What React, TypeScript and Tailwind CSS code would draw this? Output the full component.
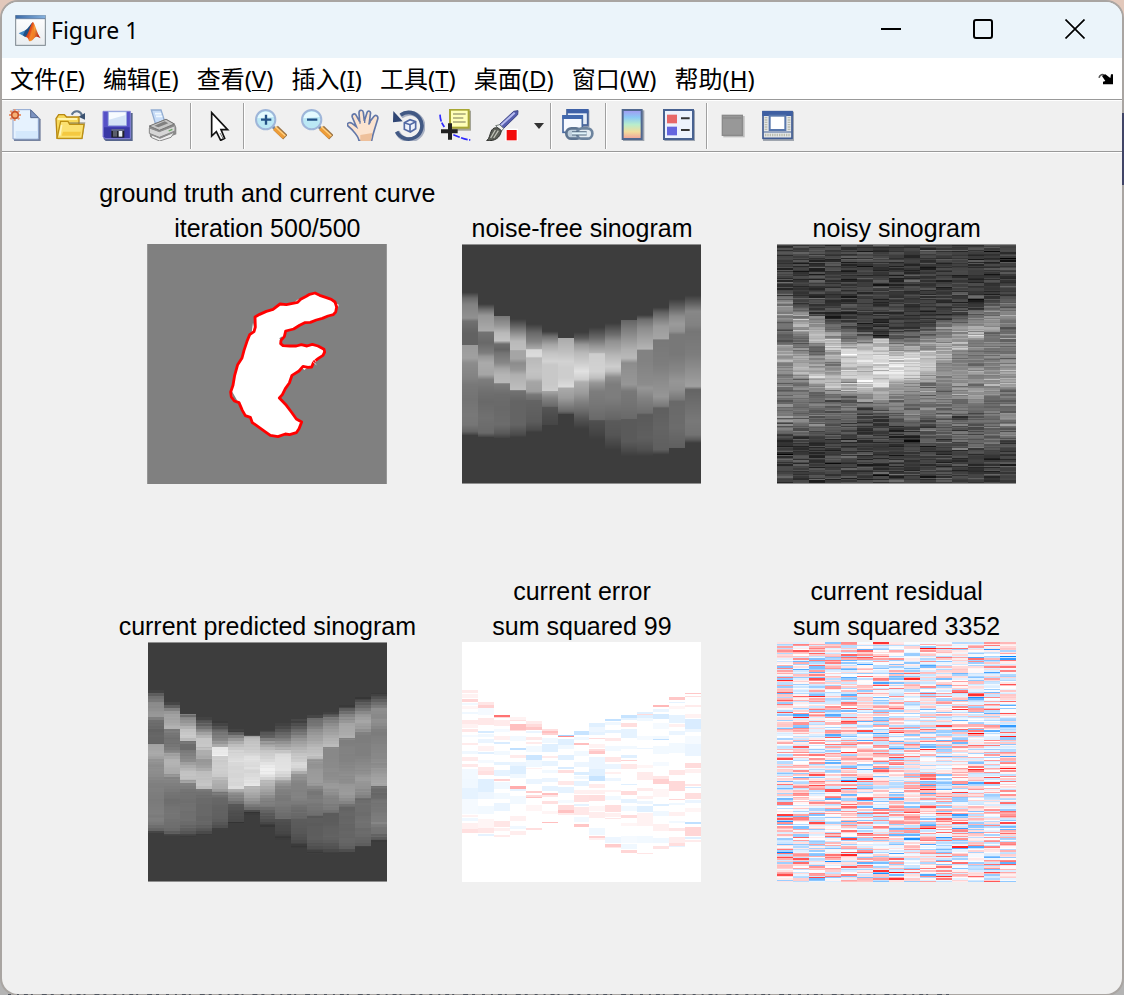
import type { ReactNode } from 'react';

type Stop = [y: number, gray: number];
type Band = [y: number, height: number, value: number];

const COLS = 15;
const ROWS = 240;
const BACKGROUND = 61;

// Brightness profile of every projection angle, top to bottom. y runs from 18 to 738.
const PROFILES: Stop[][] = [
  [[163, 61], [180, 105], [200, 130], [240, 145], [250, 112], [285, 98], [322, 98], [322, 155], [360, 160], [375, 140], [420, 130], [440, 120], [485, 115], [530, 120], [560, 118], [580, 100], [592, 65]],
  [[198, 61], [215, 110], [232, 150], [278, 170], [283, 115], [315, 105], [345, 125], [355, 150], [375, 170], [410, 165], [425, 125], [460, 112], [490, 105], [540, 112], [585, 105], [598, 65]],
  [[234, 61], [234, 120], [262, 150], [285, 185], [308, 195], [318, 110], [335, 100], [345, 115], [375, 135], [392, 165], [410, 180], [435, 185], [437, 125], [470, 108], [510, 105], [560, 108], [585, 90], [600, 65]],
  [[243, 61], [262, 95], [290, 150], [310, 185], [335, 190], [338, 165], [362, 165], [375, 140], [395, 150], [410, 175], [455, 190], [458, 115], [490, 100], [560, 100], [590, 75], [598, 61]],
  [[258, 61], [285, 105], [310, 130], [333, 170], [335, 215], [355, 220], [360, 185], [400, 195], [420, 190], [432, 165], [460, 160], [470, 120], [485, 110], [487, 100], [550, 92], [575, 75], [583, 61]],
  [[280, 61], [295, 110], [320, 165], [345, 195], [370, 210], [380, 200], [440, 200], [458, 205], [460, 165], [480, 130], [505, 105], [508, 85], [540, 75], [560, 70]],
  [[300, 61], [300, 170], [340, 190], [370, 210], [390, 205], [420, 205], [447, 220], [450, 170], [480, 155], [500, 130], [520, 105], [528, 75]],
  [[282, 61], [300, 90], [320, 150], [345, 185], [375, 205], [400, 225], [425, 205], [432, 175], [465, 155], [490, 130], [515, 110], [540, 85], [573, 61]],
  [[268, 61], [300, 105], [325, 150], [345, 180], [347, 205], [400, 210], [420, 190], [435, 150], [460, 125], [500, 118], [545, 105], [548, 80], [580, 70], [605, 61]],
  [[255, 61], [290, 110], [310, 145], [335, 165], [355, 185], [385, 205], [400, 190], [418, 140], [440, 125], [480, 125], [545, 100], [548, 90], [590, 85], [615, 72], [635, 61]],
  [[246, 61], [246, 100], [280, 130], [310, 155], [335, 175], [360, 185], [375, 140], [400, 145], [440, 150], [460, 120], [500, 115], [542, 105], [544, 90], [610, 90], [640, 72], [655, 61]],
  [[231, 61], [245, 110], [270, 140], [300, 160], [333, 180], [337, 130], [370, 130], [440, 140], [450, 150], [480, 130], [525, 110], [530, 90], [600, 95], [635, 80], [655, 61]],
  [[208, 61], [225, 100], [245, 130], [265, 155], [302, 165], [306, 120], [380, 125], [430, 140], [475, 150], [505, 120], [510, 95], [570, 100], [635, 95], [650, 61]],
  [[183, 61], [210, 100], [235, 140], [258, 155], [280, 145], [290, 120], [350, 120], [400, 135], [430, 150], [455, 145], [485, 120], [490, 105], [570, 108], [630, 95]],
  [[172, 61], [195, 95], [220, 135], [260, 130], [280, 118], [350, 125], [390, 140], [445, 160], [455, 100], [500, 110], [550, 120], [590, 115], [605, 90], [615, 61]],
];

// Prediction error per angle; positive is red, negative is blue.
const ERRORS: Band[][] = [
  [[162, 9, 0.08], [175, 12, 0.05], [189, 9, 0.16], [200, 8, -0.05], [210, 9, 0.04], [228, 6, -0.06], [252, 12, 0.09], [265, 10, 0.05], [279, 8, 0.1], [297, 6, -0.04], [320, 7, 0.08], [345, 10, -0.06], [362, 12, 0.08], [385, 9, 0.09], [400, 30, -0.05], [430, 27, -0.06], [457, 33, -0.1], [490, 45, -0.04], [537, 6, 0.05], [546, 9, -0.06], [560, 18, 0.06], [578, 13, 0.12]],
  [[198, 9, 0.1], [207, 9, 0.18], [216, 20, -0.04], [246, 22, 0.09], [285, 6, -0.16], [294, 8, -0.06], [308, 12, -0.08], [330, 14, 0.05], [348, 6, -0.12], [372, 10, -0.04], [393, 12, 0.09], [405, 12, 0.12], [430, 38, -0.12], [468, 20, -0.07], [510, 24, -0.05], [550, 25, 0.04], [575, 15, 0.1], [594, 5, -0.1]],
  [[237, 6, 0.55], [243, 4, 0.15], [251, 18, 0.08], [280, 8, -0.04], [300, 12, 0.06], [318, 7, -0.15], [345, 12, -0.05], [378, 9, -0.1], [402, 18, -0.1], [429, 7, 0.18], [438, 20, -0.06], [470, 18, -0.05], [500, 24, -0.08], [555, 18, 0.1], [576, 10, 0.06], [597, 5, 0.08]],
  [[243, 8, 0.05], [252, 4, 0.12], [264, 18, 0.25], [282, 3, 0.12], [300, 14, -0.05], [336, 7, -0.25], [357, 9, 0.08], [378, 12, -0.08], [390, 24, -0.13], [414, 12, -0.06], [450, 8, 0.32], [459, 7, -0.1], [480, 24, -0.05], [540, 15, 0.06], [570, 8, -0.06], [584, 12, 0.07]],
  [[255, 10, 0.08], [265, 8, 0.14], [273, 9, 0.22], [285, 6, -0.08], [303, 9, 0.09], [318, 6, 0.08], [330, 18, -0.05], [357, 15, -0.2], [372, 20, -0.06], [396, 4, 0.05], [430, 14, -0.08], [465, 5, 0.2], [477, 6, 0.14], [483, 4, 0.25], [507, 18, 0.04], [576, 6, 0.13]],
  [[279, 5, 0.12], [284, 8, 0.25], [292, 6, 0.18], [306, 15, -0.06], [324, 24, -0.12], [360, 6, 0.08], [375, 15, -0.09], [402, 9, -0.05], [426, 12, -0.08], [450, 15, -0.1], [472, 5, 0.25], [478, 5, 0.1], [495, 10, 0.12], [525, 10, 0.04], [557, 4, 0.25]],
  [[297, 3, -0.35], [300, 4, 0.45], [309, 18, -0.12], [327, 12, -0.06], [357, 15, -0.12], [393, 6, -0.15], [402, 9, 0.13], [435, 12, 0.09], [453, 18, -0.1], [492, 9, -0.04], [508, 14, 0.14], [522, 8, 0.24], [530, 8, 0.08]],
  [[285, 12, -0.22], [303, 9, -0.06], [320, 8, 0.25], [345, 15, -0.05], [378, 15, -0.07], [408, 8, -0.14], [420, 9, -0.06], [435, 15, -0.1], [462, 12, 0.06], [477, 22, 0.12], [503, 6, -0.1], [513, 24, 0.09], [543, 15, -0.05], [564, 8, 0.22]],
  [[261, 12, -0.12], [273, 14, -0.07], [288, 9, -0.1], [306, 3, 0.14], [324, 12, 0.05], [339, 6, 0.14], [345, 9, 0.22], [363, 36, -0.08], [399, 20, -0.12], [420, 16, -0.22], [444, 12, 0.08], [462, 12, 0.06], [476, 18, 0.13], [510, 15, 0.04], [528, 18, 0.07], [575, 22, -0.06], [600, 6, 0.18], [606, 5, 0.06]],
  [[248, 7, -0.24], [258, 9, -0.06], [282, 9, -0.1], [305, 10, 0.09], [330, 14, -0.05], [362, 16, 0.1], [384, 14, -0.08], [408, 6, 0.06], [426, 9, -0.07], [462, 6, 0.05], [480, 12, -0.05], [507, 20, 0.13], [530, 14, 0.06], [546, 4, 0.1], [602, 18, -0.07], [624, 8, 0.2], [632, 4, 0.1]],
  [[237, 10, -0.22], [247, 5, -0.1], [262, 12, 0.13], [280, 27, -0.1], [330, 9, -0.05], [357, 9, -0.12], [372, 4, 0.18], [384, 15, 0.09], [444, 4, -0.12], [465, 12, 0.14], [488, 14, -0.1], [510, 15, -0.05], [537, 8, 0.14], [560, 9, 0.04], [600, 20, -0.04], [625, 15, -0.06], [642, 9, 0.16]],
  [[228, 5, -0.12], [233, 3, 0.14], [236, 9, -0.12], [246, 10, -0.06], [300, 12, -0.04], [336, 4, -0.08], [387, 10, 0.04], [408, 24, 0.08], [456, 9, 0.08], [480, 9, 0.06], [495, 9, -0.07], [510, 17, -0.12], [530, 40, 0.05], [600, 20, -0.05], [650, 5, 0.1]],
  [[207, 5, 0.28], [218, 10, -0.08], [234, 15, -0.16], [262, 18, -0.04], [300, 8, -0.05], [308, 5, -0.24], [330, 24, -0.05], [378, 12, -0.04], [420, 9, 0.1], [428, 16, 0.18], [460, 24, 0.04], [503, 7, -0.13], [525, 15, -0.06], [565, 20, 0.06], [606, 14, -0.06], [630, 10, 0.11]],
  [[182, 10, 0.22], [197, 5, -0.1], [210, 9, 0.04], [236, 24, -0.1], [264, 9, 0.06], [285, 12, -0.08], [320, 30, -0.05], [402, 16, 0.1], [435, 30, 0.15], [488, 4, 0.16], [500, 8, -0.06], [528, 12, 0.06], [555, 6, -0.05], [577, 8, 0.1], [604, 16, 0.07], [622, 7, 0.13], [629, 4, -0.1]],
  [[170, 4, 0.22], [180, 4, 0.12], [208, 5, 0.08], [234, 12, 0.05], [249, 30, -0.15], [279, 9, -0.07], [300, 24, -0.04], [325, 35, -0.08], [381, 15, 0.14], [399, 12, 0.06], [444, 6, 0.1], [453, 4, -0.16], [470, 18, 0.13], [492, 10, -0.08], [515, 12, 0.04], [558, 6, -0.25], [574, 26, 0.16], [604, 4, -0.12], [612, 6, 0.08]],
];

// Strongest noise samples: column, y, amplitude.
const OUTLIERS: [number, number, number][] = [
  [9, 34, 0.95], [8, 128, 0.85], [12, 185, -0.9], [12, 293, 1], [7, 287, 0.8], [14, 61, -1], [6, 20, 0.8],
  [14, 298, 0.9], [4, 436, 1], [5, 427, 0.9], [9, 461, 0.95], [8, 608, -0.9], [3, 676, -0.9], [0, 649, -1],
  [4, 654, 0.85], [7, 709, 0.95], [14, 559, 0.8], [10, 533, 0.75], [3, 461, 0.7], [13, 422, 0.7], [13, 440, 0.7],
  [12, 440, -0.75], [9, 577, 0.9], [11, 577, -0.8], [4, 608, 0.75], [2, 181, 0.85], [0, 132, 0.85], [0, 716, 0.7],
  [9, 716, -0.7], [0, 229, 0.7], [14, 230, 0.7], [12, 400, 0.85], [9, 569, -0.7], [6, 290, -0.75], [4, 71, -0.6],
];

function createRandom(seed: number) {
  let state = seed;
  return () => {
    state = (state + 0x6d2b79f5) | 0;
    let t = Math.imul(state ^ (state >>> 15), 1 | state);
    t = (t + Math.imul(t ^ (t >>> 7), 61 | t)) ^ t;
    return ((t ^ (t >>> 14)) >>> 0) / 4294967296;
  };
}

function profileAt(col: number, y: number) {
  const stops = PROFILES[col];
  if (y < stops[0][0] || y > stops[stops.length - 1][0]) return BACKGROUND;
  for (let i = 1; i < stops.length; i++) {
    const [y0, g0] = stops[i - 1];
    const [y1, g1] = stops[i];
    if (y <= y1) return y1 === y0 ? g1 : g0 + ((g1 - g0) * (y - y0)) / (y1 - y0);
  }
  return BACKGROUND;
}

function errorAt(col: number, y: number) {
  const band = ERRORS[col].find(([top, height]) => y >= top && y < top + height);
  return band ? band[2] : 0;
}

const yOf = (row: number) => 19.5 + row * 3;

const build = (cell: (col: number, row: number) => number) =>
  Array.from({ length: COLS }, (_, col) => Array.from({ length: ROWS }, (_, row) => cell(col, row)));

const random = createRandom(500);
const NOISE_ROWS = 180;
const rawNoise = Array.from({ length: COLS }, () =>
  Array.from({ length: NOISE_ROWS }, () => (random() + random() + random() + random() - 2) * 0.52),
);
OUTLIERS.forEach(([col, y, value]) => {
  rawNoise[col][Math.floor(((y - 18) / 720) * NOISE_ROWS)] = value;
});

const noise = build((col, row) => rawNoise[col][Math.floor((row / ROWS) * NOISE_ROWS)]);
const clean = build((col, row) => profileAt(col, yOf(row)));
const noisy = build((col, row) => clean[col][row] + noise[col][row] * 58);
const predicted = build((col, row) => {
  const y = yOf(row);
  const value = profileAt(col, Math.floor(y / 9) * 9 + 4);
  const base = clean[col][row] === BACKGROUND ? BACKGROUND : value;
  return BACKGROUND + (base - BACKGROUND) * 1.09 - errorAt(col, y) * 40;
});
const error = build((col, row) => errorAt(col, yOf(row)));
const residual = build((col, row) => noise[col][row] + error[col][row] * 0.3);

function grayColor(value: number) {
  const v = Math.max(0, Math.min(255, Math.round(value)));
  return `rgb(${v},${v},${v})`;
}

function divergingColor(value: number) {
  const v = Math.min(1, Math.abs(value));
  const fade = Math.round(255 * (1 - v));
  return value >= 0 ? `rgb(255,${fade},${fade})` : `rgb(${fade},${Math.round(255 - 125 * v)},255)`;
}

interface HeatmapProps {
  label: string;
  data: number[][];
  color: (value: number) => string;
  framed?: boolean;
}

function Heatmap({ label, data, color, framed = false }: HeatmapProps) {
  return (
    <svg
      role="img"
      aria-label={label}
      viewBox="0 0 239 240"
      shapeRendering="crispEdges"
      className="block h-[240px] w-[239px]"
    >
      {data.map((column, col) => {
        const x = Math.round((col * 239) / COLS);
        const width = Math.round(((col + 1) * 239) / COLS) - x;
        const bars: ReactNode[] = [];
        let start = 0;
        for (let row = 1; row <= column.length; row++) {
          if (row === column.length || color(column[row]) !== color(column[start])) {
            bars.push(<rect key={start} x={x} y={start} width={width} height={row - start} fill={color(column[start])} />);
            start = row;
          }
        }
        return <g key={col}>{bars}</g>;
      })}
      {framed && <path d="M0 .5H239M0 239.5H239" stroke="#8f8f8f" strokeWidth="1" />}
    </svg>
  );
}

const CURVE =
  '526,173 540,180 558,186 575,192 586,200 591,215 588,230 581,238 565,242 548,249 530,254 512,261 495,262 480,270 462,281 438,287 434,304 424,315 423,325 430,331 450,332 470,332 485,328 502,332 518,327 535,332 553,342 555,350 550,360 535,370 522,380 516,395 505,396 490,393 478,407 457,420 449,443 437,460 428,478 419,488 440,510 455,530 470,551 486,560 478,580 470,592 450,598 437,596 415,604 392,600 375,588 350,570 338,562 332,546 317,541 308,525 298,502 284,497 275,485 273,470 280,450 285,420 294,388 307,368 313,345 322,318 330,298 343,289 347,275 346,245 360,237 380,228 400,222 421,206 440,208 474,201 483,192 500,183 510,177';

function GroundTruth() {
  return (
    <svg role="img" aria-label="ground truth and current curve" viewBox="22 26 720 720" className="block h-[240px] w-[240px]">
      <rect x="22" y="26" width="720" height="720" fill="#808080" />
      <polygon points={CURVE} fill="#fff" />
      <path d="M276 466L294 498L280 492ZM419 309L428 303L424 316Z" fill="#808080" />
      <path d="M340 262L336 292L345 286ZM460 204L476 192L484 196ZM590 204L597 208L594 220ZM486 396L494 404L502 397Z" fill="#fff" />
      <polygon points={CURVE} fill="none" stroke="#f00" strokeWidth="8.5" strokeLinejoin="round" />
      <path d="M518 378L530 388M524 372L529 380" stroke="#fff" strokeWidth="2" />
      <path d="M23 26V746M741 26V746" stroke="#a8a8a8" strokeWidth="2" />
    </svg>
  );
}

interface PlotProps {
  lines: string[];
  children: ReactNode;
}

function Plot({ lines, children }: PlotProps) {
  return (
    <figure className="flex flex-col items-center justify-end">
      <figcaption className="-mb-0.5 pt-0.5 text-center text-[25px] leading-[35px] whitespace-nowrap">
        {lines.map((line) => (
          <div key={line}>{line}</div>
        ))}
      </figcaption>
      {children}
    </figure>
  );
}

function Icon({ children }: { children: ReactNode }) {
  return (
    <svg viewBox="0 0 96 96" aria-hidden="true" className="h-8 w-8 shrink-0">
      {children}
    </svg>
  );
}

function MatlabLogo() {
  return (
    <svg viewBox="0 0 93 93" aria-hidden="true" className="h-[31px] w-[31px] shrink-0">
      <defs>
        <linearGradient id="logo-bg" x1="0" y1="0" x2="0" y2="1">
          <stop offset="0" stopColor="#fff" />
          <stop offset="1" stopColor="#e9edf0" />
        </linearGradient>
        <linearGradient id="logo-bar" x1="0" x2="1">
          <stop offset="0" stopColor="#3c6ba8" />
          <stop offset="1" stopColor="#86b2de" />
        </linearGradient>
        <linearGradient id="logo-peak" x1="0" y1="0" x2="1" y2=".4">
          <stop offset="0" stopColor="#8c2414" />
          <stop offset=".45" stopColor="#e5501c" />
          <stop offset=".62" stopColor="#f7a63c" />
          <stop offset="1" stopColor="#b9281a" />
        </linearGradient>
      </defs>
      <rect x="2" y="2" width="89" height="89" fill="url(#logo-bg)" stroke="#7c868e" strokeWidth="3" />
      <rect x="2" y="1" width="89" height="9" fill="url(#logo-bar)" />
      <path d="M3 11H90" stroke="#294f80" strokeWidth="2" />
      <path d="M11 55L31 46L42 54L31 66Z" fill="#3f86c4" />
      <path d="M31 46C40 40 46 27 53 22L43 58L31 66L24 61Z" fill="#1f4f86" />
      <path d="M31 66C42 56 48 22 54 21C60 25 66 56 77 70C69 66 65 62 58 69C51 78 47 80 42 78C40 70 37 66 31 66Z" fill="url(#logo-peak)" />
      <path d="M54 22C54 42 52 61 43 77C50 76 55 68 60 65Z" fill="#f47b20" opacity=".8" />
    </svg>
  );
}

function NewIcon() {
  return (
    <Icon>
      <path d="M15 4H68L95 31V96H15Z" fill="#76839f" />
      <path d="M12 2H65L88 26V90H12Z" fill="#e6f2fe" stroke="#8da5cf" strokeWidth="3" />
      <path d="M20 66H86V88H20Z" fill="#d4e8fc" />
      <path d="M65 3V26H88Z" fill="#7c93c1" stroke="#53688f" strokeWidth="3" />
      <path d="M17 0V36M0 18H36M4 5L31 31M31 5L4 31" stroke="#e79a76" strokeWidth="6" />
      <circle cx="18" cy="18" r="10" fill="#f7b175" stroke="#c7532b" strokeWidth="5" />
    </Icon>
  );
}

function OpenIcon() {
  return (
    <Icon>
      <path d="M50 17C58 2 75 4 81 18" fill="none" stroke="#60768f" strokeWidth="6" />
      <path d="M90 12V32L70 23Z" fill="#3c5271" />
      <path d="M3 29L11 17H28L35 24H72V86H6Z" fill="#f7d95a" stroke="#b78712" strokeWidth="4" />
      <path d="M8 30H66" stroke="#fff4ad" strokeWidth="6" />
      <path d="M19 40H91L82 91H8Z" fill="#76735f" opacity=".6" />
      <path d="M17 37H39L44 46H87L81 88H6Z" fill="#fbe171" stroke="#bd9013" strokeWidth="4" />
      <path d="M20 48L14 80" stroke="#fff6be" strokeWidth="5" />
      <path d="M24 68H78L75 80H20Z" fill="#f4c941" />
    </Icon>
  );
}

function SaveIcon() {
  return (
    <Icon>
      <path d="M8 12H95V96H14L8 90Z" fill="#56658c" />
      <path d="M6 7H88V89H12L6 83Z" fill="#5651c7" stroke="#8582d8" strokeWidth="3" />
      <path d="M9 55H86V87H14L9 82Z" fill="#3938a6" />
      <path d="M22 8H76V50H22Z" fill="#f7fbff" stroke="#9aaddf" strokeWidth="3" />
      <path d="M24 32L74 18V48H24Z" fill="#d5e4f7" />
      <rect x="31" y="61" width="39" height="25" fill="#20212b" />
      <rect x="36" y="66" width="12" height="17" fill="#5a5e6b" />
      <rect x="53" y="66" width="11" height="17" fill="#e8edf4" />
      <rect x="31" y="61" width="39" height="4" fill="#7b83ae" />
    </Icon>
  );
}

function PrintIcon() {
  return (
    <Icon>
      <path d="M13 3H42L53 37L25 43Z" fill="#c7dcf7" stroke="#91acd1" strokeWidth="4" />
      <path d="M24 14H43M27 22H46" stroke="#eff8ff" strokeWidth="5" />
      <path d="M6 51L57 29L83 44L88 56V76L38 96L9 83Z" fill="#8a8a8a" />
      <path d="M7 51L57 31L82 45L37 64Z" fill="#c6c6c6" stroke="#777" strokeWidth="3" />
      <path d="M22 50L53 37L64 43L34 55Z" fill="#808080" />
      <path d="M7 57L37 68L84 50V66L37 85L7 73Z" fill="#d6d6d6" stroke="#8a8a8a" strokeWidth="3" />
      <path d="M12 77L39 88L83 69L72 85L38 96L14 86Z" fill="#eee" stroke="#8a8a8a" strokeWidth="3" />
      <path d="M65 66L76 61" stroke="#6aa863" strokeWidth="4" />
    </Icon>
  );
}

function PointerIcon() {
  return (
    <svg viewBox="0 0 90 96" aria-hidden="true" className="h-8 w-[30px] shrink-0">
      <path d="M29 11V81L43 68L56 94L68 88L57 62H77Z" fill="#fff" stroke="#111" strokeWidth="5" />
      <path d="M54 72L64 90" stroke="#777" strokeWidth="3" />
    </svg>
  );
}

function ZoomIcon({ plus = false }: { plus?: boolean }) {
  return (
    <Icon>
      <path d="M49 49L63 62" stroke="#77879b" strokeWidth="9" />
      <path d="M62 57L91 85" stroke="#9b7548" strokeWidth="19" />
      <path d="M59 57L88 84" stroke="#ed9c38" strokeWidth="14" />
      <path d="M61 53L91 81" stroke="#ffd182" strokeWidth="4" />
      <circle cx="32" cy="32" r="29" fill="#bbe8f5" stroke="#9fb6d9" strokeWidth="6" />
      <path d="M7 28A26 26 0 0 1 56 24Z" fill="#e5faff" />
      <path d="M18 32H49" stroke="#245286" strokeWidth="7" />
      {plus && <path d="M33 17V47" stroke="#245286" strokeWidth="7" />}
    </Icon>
  );
}

function HandIcon() {
  return (
    <Icon>
      <path
        d="M36 95C34 81 23 71 15 62L2 50C-1 42 8 38 15 43L28 53L16 25C13 15 24 11 28 20L38 38L36 12C36 2 47 1 49 10L52 36L60 11C63 3 73 6 70 16L67 40L80 23C86 15 95 21 92 31L83 60C78 75 76 82 74 95Z"
        fill="#fbe3cf"
        stroke="#6277a8"
        strokeWidth="5"
      />
      <path d="M39 44V36M53 42V34M66 46L70 38" fill="none" stroke="#6277a8" strokeWidth="4" />
      <path d="M40 78V96H72L76 72Z" fill="#eec09b" />
    </Icon>
  );
}

function RotateIcon() {
  return (
    <Icon>
      <path d="M24 22A40 40 0 1 1 13 68" fill="none" stroke="#a8b0c2" strokeWidth="15" />
      <path d="M23 18A40 40 0 1 1 11 68" fill="none" stroke="#425984" strokeWidth="11" />
      <path d="M1 6L29 37L0 40Z" fill="#304674" />
      <path d="M34 41L51 32L68 38V59L52 69L34 61Z" fill="#edf1fb" stroke="#5269a4" strokeWidth="5" />
      <path d="M34 41L51 47L68 38M51 47V69" fill="none" stroke="#5269a4" strokeWidth="5" />
    </Icon>
  );
}

function DataTipIcon() {
  return (
    <Icon>
      <path d="M3 17C4 35 8 42 16 54M43 77C58 82 71 91 94 93" fill="none" stroke="#2e29ff" strokeWidth="5" strokeDasharray="21 4" />
      <rect x="35" y="5" width="61" height="60" fill="#a3a396" />
      <rect x="33" y="2" width="56" height="54" fill="#ffffb9" stroke="#a8a735" strokeWidth="6" />
      <path d="M42 15H80M42 27H73M42 39H80" stroke="#a5a578" strokeWidth="4" />
      <path d="M33 43V92M6 67H56" stroke="#222" strokeWidth="12" />
    </Icon>
  );
}

function BrushIcon() {
  return (
    <svg viewBox="0 0 108 96" aria-hidden="true" className="h-8 w-9 shrink-0">
      <path d="M42 48L86 7L99 5L98 17L54 60Z" fill="#555eae" stroke="#3e4584" strokeWidth="3" />
      <path d="M48 49L89 11" stroke="#b8bdf0" strokeWidth="6" />
      <path d="M32 50L44 47L56 58L49 67Z" fill="#edf0ef" stroke="#737b77" strokeWidth="3" />
      <path d="M49 65C46 86 30 97 5 95C14 88 14 76 19 66C23 56 37 50 49 65Z" fill="#5b5e57" stroke="#2f312e" strokeWidth="3" />
      <path d="M31 63L17 87M40 65L26 87" stroke="#bfc1b7" strokeWidth="4" />
      <rect x="61" y="59" width="38" height="37" fill="#fff" />
      <rect x="65" y="63" width="30" height="31" fill="#f30c0c" />
    </svg>
  );
}

function LinkIcon() {
  return (
    <Icon>
      <rect x="18" y="4" width="64" height="50" fill="#8995ad" />
      <rect x="15" y="2" width="62" height="46" fill="#e6eef9" stroke="#466397" strokeWidth="5" />
      <rect x="15" y="0" width="64" height="13" fill="#3e61a7" />
      <rect x="3" y="21" width="58" height="49" fill="#f6f9fe" stroke="#47689f" strokeWidth="5" />
      <rect x="1" y="18" width="62" height="12" fill="#4168ad" />
      <rect x="13" y="58" width="44" height="31" rx="15" fill="#bdcedb" stroke="#5d7490" strokeWidth="8" />
      <rect x="45" y="58" width="46" height="31" rx="15" fill="#e4ecf1" stroke="#6d849e" strokeWidth="8" />
      <path d="M30 73H74" stroke="#52687f" strokeWidth="13" />
      <path d="M30 73H74" stroke="#e1f3fa" strokeWidth="7" />
    </Icon>
  );
}

function ColorbarIcon() {
  return (
    <Icon>
      <defs>
        <linearGradient id="colorbar" x1="0" y1="0" x2="0" y2="1">
          <stop offset="0" stopColor="#a498f1" />
          <stop offset=".25" stopColor="#8bc9f5" />
          <stop offset=".5" stopColor="#b8edcd" />
          <stop offset=".75" stopColor="#f2de9d" />
          <stop offset="1" stopColor="#f1a09a" />
        </linearGradient>
      </defs>
      <rect x="18" y="4" width="64" height="92" fill="#9ba3ae" />
      <rect x="17" y="3" width="57" height="87" fill="url(#colorbar)" stroke="#51688f" strokeWidth="6" />
    </Icon>
  );
}

function LegendIcon() {
  return (
    <Icon>
      <rect x="4" y="4" width="92" height="92" fill="#9ba3b0" />
      <rect x="3" y="3" width="87" height="87" fill="#edf3fd" stroke="#486291" strokeWidth="6" />
      <rect x="12" y="17" width="30" height="26" fill="#e76868" />
      <rect x="12" y="53" width="30" height="26" fill="#6466df" />
      <path d="M54 28H80M54 63H80" stroke="#353535" strokeWidth="6" />
    </Icon>
  );
}

function HidePlotToolsIcon() {
  return (
    <svg viewBox="0 0 90 96" aria-hidden="true" className="h-8 w-[30px] shrink-0">
      <rect x="16" y="21" width="64" height="64" fill="#bcbcbc" />
      <rect x="13" y="19" width="60" height="60" fill="#989898" stroke="#8a8a8a" strokeWidth="4" />
      <path d="M15 27H71" stroke="#8a8a8a" strokeWidth="5" />
    </svg>
  );
}

function ShowPlotToolsIcon() {
  return (
    <Icon>
      <rect x="3" y="8" width="93" height="88" fill="#a0a6af" />
      <rect x="3" y="8" width="87" height="80" fill="#e3e6e8" stroke="#405b91" strokeWidth="5" />
      <rect x="1" y="6" width="91" height="15" fill="#3e5fa2" />
      <rect x="23" y="20" width="47" height="43" fill="#fff" stroke="#5877ac" strokeWidth="6" />
      <path d="M12 24V67M81 24V67M9 78H86" stroke="#bbbdad" strokeWidth="8" strokeDasharray="4 3" />
      <path d="M4 69H89" stroke="#4a679a" strokeWidth="3" />
    </Icon>
  );
}

function ToolButton({ label, children }: { label: string; children: ReactNode }) {
  return (
    <button type="button" aria-label={label} className="flex h-8 items-center justify-center">
      {children}
    </button>
  );
}

function Group({ children }: { children: ReactNode }) {
  return <div className="flex items-center gap-3.5 pb-0.5">{children}</div>;
}

function Separator() {
  return <div className="mx-[11px] h-[46px] w-px shrink-0 bg-[#a0a0a0] shadow-[1px_0_0_#fff]" />;
}

const MENUS = [
  ['文件', 'F'],
  ['编辑', 'E'],
  ['查看', 'V'],
  ['插入', 'I'],
  ['工具', 'T'],
  ['桌面', 'D'],
  ['窗口', 'W'],
  ['帮助', 'H'],
];

export default function App() {
  return (
    <div className="relative flex min-h-screen flex-col overflow-hidden bg-[linear-gradient(#e2c8bb_23px,#b4b4b4_23px)] p-0.5 font-['Liberation_Sans',sans-serif] text-black">
      <main className="flex flex-1 flex-col overflow-hidden rounded-2xl bg-[#f0f0f0] shadow-[0_0_0_2px_#a9a5a2]">
        <header className="flex h-14 items-center justify-between bg-[#ebf4fa]">
          <div className="flex items-center gap-[5px] pl-[13px]">
            <MatlabLogo />
            <h1 className="font-['Noto_Sans',sans-serif] text-[23px] leading-7">Figure 1</h1>
          </div>
          <div className="flex self-start pr-px">
            <button type="button" aria-label="Minimize" className="flex h-[54px] w-[92px] items-center justify-center">
              <svg viewBox="0 0 20 20" className="h-5 w-5" fill="none" stroke="#000" strokeWidth="2">
                <path d="M0 10H20" />
              </svg>
            </button>
            <button type="button" aria-label="Maximize" className="flex h-[54px] w-[92px] items-center justify-center">
              <svg viewBox="0 0 20 20" className="h-5 w-5" fill="none" stroke="#000" strokeWidth="2">
                <rect x="1" y="1" width="18" height="18" rx="2" />
              </svg>
            </button>
            <button type="button" aria-label="Close" className="flex h-[54px] w-[92px] items-center justify-center">
              <svg viewBox="0 0 20 20" className="h-5 w-5" fill="none" stroke="#000" strokeWidth="1.7">
                <path d="M.5 .5L19.5 19.5M19.5 .5L.5 19.5" />
              </svg>
            </button>
          </div>
        </header>

        <nav className="flex h-[42px] items-center justify-between border-b border-[#999] bg-white pr-2 pl-2">
          <div className="flex gap-[18px] font-['Noto_Sans','Noto_Sans_CJK_SC',sans-serif] text-2xl leading-8 whitespace-nowrap">
            {MENUS.map(([name, key]) => (
              <button key={key} type="button">
                {name}(<span className="underline decoration-1 underline-offset-2">{key}</span>)
              </button>
            ))}
          </div>
          <button type="button" aria-label="Dock figure">
            <svg viewBox="0 0 48 36" className="h-3 w-4">
              <path d="M3 14C6 4 14 3 20 8" fill="none" stroke="#555" strokeWidth="5" />
              <path d="M45 4V34H15V26L22 24L12 9L22 4L37 15L39 4Z" fill="#000" />
            </svg>
          </button>
        </nav>

        <div role="toolbar" className="flex h-[52px] shrink-0 items-center border-t border-b border-t-white border-b-[#999] pl-[7px] shadow-[0_1px_0_#fff]">
          <Group>
            <ToolButton label="New Figure"><NewIcon /></ToolButton>
            <ToolButton label="Open File"><OpenIcon /></ToolButton>
            <ToolButton label="Save Figure"><SaveIcon /></ToolButton>
            <ToolButton label="Print Figure"><PrintIcon /></ToolButton>
          </Group>
          <Separator />
          <Group>
            <ToolButton label="Edit Plot"><PointerIcon /></ToolButton>
          </Group>
          <Separator />
          <Group>
            <ToolButton label="Zoom In"><ZoomIcon plus /></ToolButton>
            <ToolButton label="Zoom Out"><ZoomIcon /></ToolButton>
            <ToolButton label="Pan"><HandIcon /></ToolButton>
            <ToolButton label="Rotate 3D"><RotateIcon /></ToolButton>
            <ToolButton label="Data Cursor"><DataTipIcon /></ToolButton>
            <ToolButton label="Brush Data"><BrushIcon /></ToolButton>
          </Group>
          <button type="button" aria-label="Brush colors" className="-mr-1.5 ml-3 flex h-8 items-center">
            <svg viewBox="0 0 12 8" className="h-2 w-3">
              <path d="M1 1H11L6 7Z" fill="#333" />
            </svg>
          </button>
          <Separator />
          <Group>
            <ToolButton label="Link Plot"><LinkIcon /></ToolButton>
          </Group>
          <Separator />
          <Group>
            <ToolButton label="Insert Colorbar"><ColorbarIcon /></ToolButton>
            <ToolButton label="Insert Legend"><LegendIcon /></ToolButton>
          </Group>
          <Separator />
          <Group>
            <ToolButton label="Hide Plot Tools"><HidePlotToolsIcon /></ToolButton>
            <ToolButton label="Show Plot Tools and Dock Figure"><ShowPlotToolsIcon /></ToolButton>
          </Group>
        </div>

        <section className="grid grid-cols-3 gap-y-[88px] pt-[22px] pr-[68px] pb-28 pl-[108px]">
          <Plot lines={['ground truth and current curve', 'iteration 500/500']}>
            <GroundTruth />
          </Plot>
          <Plot lines={['noise-free sinogram']}>
            <Heatmap label="noise-free sinogram" data={clean} color={grayColor} framed />
          </Plot>
          <Plot lines={['noisy sinogram']}>
            <Heatmap label="noisy sinogram" data={noisy} color={grayColor} framed />
          </Plot>
          <Plot lines={['current predicted sinogram']}>
            <Heatmap label="current predicted sinogram" data={predicted} color={grayColor} framed />
          </Plot>
          <Plot lines={['current error', 'sum squared 99']}>
            <Heatmap label="current error" data={error} color={divergingColor} />
          </Plot>
          <Plot lines={['current residual', 'sum squared 3352']}>
            <Heatmap label="current residual" data={residual} color={divergingColor} />
          </Plot>
        </section>
      </main>

      {/* what shows of the desktop behind the window */}
      <svg viewBox="0 0 950 2" preserveAspectRatio="none" aria-hidden="true" className="absolute bottom-0 left-2 h-0.5 w-[944px]">
        <path d="M0 1H950" stroke="#50555e" strokeWidth="2" strokeDasharray="3 6 2 5 4 3 2 9 5 4 3 7" />
      </svg>
      <div className="absolute top-[113px] right-0 h-[72px] w-0.5 bg-[#404466]" />
    </div>
  );
}
